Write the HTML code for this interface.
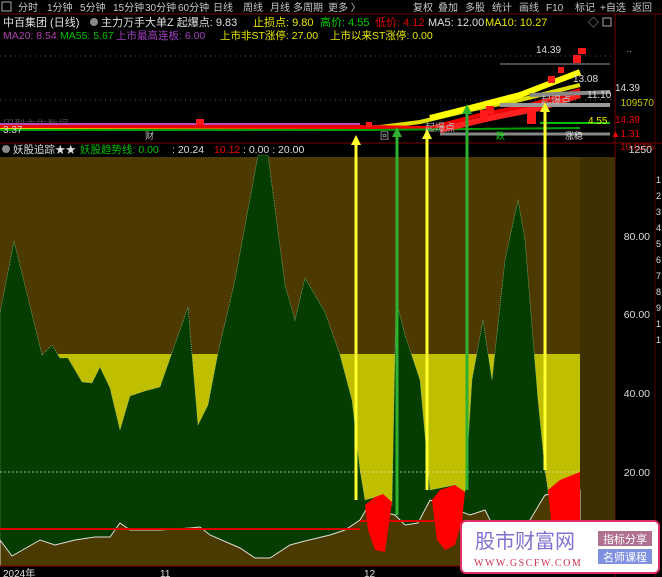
<!DOCTYPE html>
<html><head><meta charset="utf-8"><style>
html,body{margin:0;padding:0;background:#000;width:662px;height:577px;overflow:hidden}
svg{display:block;font-family:"Liberation Sans","Noto Sans CJK SC",sans-serif}
</style></head><body>
<svg width="662" height="577" viewBox="0 0 662 577" xmlns="http://www.w3.org/2000/svg">
<rect width="662" height="577" fill="#000"/>
<!-- toolbar -->
<g font-size="10" fill="#c8c8c8">
<rect x="2" y="2" width="9" height="9" fill="none" stroke="#aaa"/>
<text x="18" y="11">分时</text><text x="47" y="11">1分钟</text><text x="80" y="11">5分钟</text><text x="113" y="11">15分钟</text><text x="145" y="11">30分钟</text><text x="178" y="11">60分钟</text><text x="213" y="11">日线</text><text x="243" y="11">周线</text><text x="270" y="11">月线</text><text x="293" y="11">多周期</text><text x="328" y="11">更多 〉</text>
<text x="413" y="11">复权</text><text x="438" y="11">叠加</text><text x="465" y="11">多股</text><text x="492" y="11">统计</text><text x="519" y="11">画线</text><text x="546" y="11">F10</text><text x="575" y="11">标记</text><text x="600" y="11">+自选</text><text x="632" y="11">返回</text>
</g>
<line x1="0" y1="14" x2="662" y2="14" stroke="#600" />
<!-- title rows -->
<g font-size="11">
<text x="3" y="26" fill="#e0e0e0">中百集团 (日线)</text>
<circle cx="94" cy="22" r="4" fill="#888"/>
<text x="101" y="26" fill="#e0e0e0">主力万手大单Z 起爆点: 9.83</text>
<text x="253" y="26" fill="#e8e800">止损点: 9.80</text>
<text x="320" y="26" fill="#00d000">高价: 4.55</text>
<text x="375" y="26" fill="#e00000">低价: 4.12</text>
<text x="428" y="26" fill="#e0e0e0">MA5: 12.00</text>
<text x="485" y="26" fill="#e8e800">MA10: 10.27</text>
<text x="588" y="26" fill="#aaa">◇</text><rect x="603" y="18" width="8" height="8" fill="none" stroke="#aaa"/>
</g>
<g font-size="10.5">
<text x="3" y="39" fill="#b040b0">MA20: 8.54</text>
<text x="60" y="39" fill="#00c000">MA55: 5.67</text>
<text x="116" y="39" fill="#a040c0">上市最高连板: 6.00</text>
<text x="220" y="39" fill="#e8e800">上市非ST涨停: 27.00</text>
<text x="330" y="39" fill="#e8e800">上市以来ST涨停: 0.00</text>
</g>
<line x1="615" y1="14" x2="615" y2="577" stroke="#700"/>
<line x1="655" y1="14" x2="655" y2="577" stroke="#500"/>
<line x1="0" y1="56" x2="615" y2="56" stroke="#555" stroke-dasharray="1 4"/>
<line x1="0" y1="100" x2="615" y2="100" stroke="#555" stroke-dasharray="1 4"/>
<!-- price chart -->
<text x="3" y="128" font-size="11" fill="#444">田型主生数据</text>
<g stroke-width="2" fill="none">
<path d="M0 128 L360 128 L380 127 L420 122 L470 110 L520 100 L580 85" stroke="#e0e000" stroke-width="4"/>
<path d="M0 126 L360 127 L430 128 L480 115 L530 105 L580 90" stroke="#e00" stroke-width="4"/>
<path d="M0 124 L360 124" stroke="#b050b0"/>
<path d="M0 130 L370 130 L580 128" stroke="#00a000"/>
<path d="M430 118 L470 108 L520 95 L580 72" stroke="#ffff00" stroke-width="6"/>
<path d="M440 130 L490 118 L540 108 L580 95" stroke="#ff2020" stroke-width="6"/>
<path d="M500 105 L610 105" stroke="#999" stroke-width="4"/>
<path d="M530 95 L610 92" stroke="#888" stroke-width="4"/>
<path d="M440 134 L610 134" stroke="#888" stroke-width="3"/>
<path d="M500 64 L610 64" stroke="#999" stroke-width="1"/>
<path d="M540 123 L610 123" stroke="#00c000" stroke-width="2"/>
</g>
<g fill="#ff1a1a">
<rect x="196" y="119" width="8" height="6"/><rect x="366" y="122" width="6" height="5"/>
<rect x="480" y="110" width="8" height="12"/><rect x="486" y="106" width="8" height="8"/>
<rect x="527" y="110" width="9" height="14"/><rect x="548" y="76" width="7" height="7"/>
<rect x="558" y="67" width="6" height="6"/><rect x="573" y="55" width="8" height="8"/><rect x="578" y="48" width="8" height="6"/>
</g>
<g font-size="10" fill="#ddd">
<text x="3" y="133">3.37</text><text x="536" y="53">14.39</text><text x="573" y="82">13.08</text><text x="587" y="98">11.10</text>
<text x="541" y="104" fill="#bbb">起爆点</text><text x="425" y="131" fill="#bbb">起爆点</text>
<text x="588" y="124" fill="#ee0">4.55</text>
<text x="145" y="139" fill="#bbb" font-size="9">财</text>
<text x="380" y="139" fill="#bbb" font-size="9">回</text>
<text x="496" y="139" fill="#0d0" font-size="9">跌</text>
<text x="565" y="139" fill="#ddd" font-size="9">涨稳</text>
</g>
<g font-size="10" text-anchor="end">
<text x="632" y="52" fill="#aaa">..</text>
<text x="640" y="91" fill="#ddd">14.39</text>
<text x="654" y="106" fill="#c8c800">109570</text>
<text x="640" y="123" fill="#e00">14.39</text>
<text x="640" y="137" fill="#e00">▲1.31</text>
<text x="654" y="150" fill="#c00">10.02%</text>
<text x="652" y="153" fill="#ddd" font-size="10.5" dy="-2" display="none">1250</text>
</g>
<line x1="0" y1="143" x2="662" y2="143" stroke="#700"/>
<!-- indicator title -->
<g font-size="10.5">
<circle cx="6" cy="149" r="4" fill="#888"/>
<text x="13" y="153" fill="#ddd">妖股追踪★★</text>
<text x="80" y="153" fill="#00c000">妖股趋势线: 0.00</text>
<text x="172" y="153" fill="#ddd">: 20.24</text>
<text x="214" y="153" fill="#e00">10.12</text>
<text x="243" y="153" fill="#ddd">: 0.00 : 20.00</text>
<text x="652" y="153" fill="#ddd" text-anchor="end">1250</text>
</g>
<!-- indicator panel -->
<rect x="0" y="157" width="615" height="409" fill="#4d3a00"/>
<rect x="580" y="157" width="35" height="409" fill="#3e3000"/>
<rect x="0" y="354" width="580" height="206" fill="#bfbf00"/>
<path d="M0 560 L0 313 L14 241 L42 355 L52 345 L60 358 L68 358 L82 382 L92 383 L100 367 L110 388 L120 430 L130 396 L145 391 L160 387 L188 307 L198 425 L208 405 L218 353 L235 280 L258 155 L268 155 L285 285 L295 320 L305 278 L325 312 L340 355 L352 400 L360 470 L365 500 L383 495 L392 505 L396 300 L405 335 L420 380 L430 490 L455 485 L465 492 L472 380 L483 320 L492 380 L505 260 L518 200 L525 240 L538 400 L545 470 L548 490 L548 560 Z" fill="#053d00" stroke="#9c9" stroke-width="0.6" stroke-dasharray="1 1"/>
<line x1="0" y1="472" x2="580" y2="472" stroke="#ddd" stroke-dasharray="2 2" stroke-width="0.8"/>
<path d="M0 540 L12 556 L40 540 L55 545 L75 540 L95 537 L110 537 L120 523 L130 530 L160 530 L190 528 L200 527 L210 535 L240 548 L255 558 L270 558 L290 545 L305 541 L330 535 L345 530 L360 520 L367 508 L395 515 L405 525 L418 523 L430 500 L470 515 L485 510 L490 520 L500 535 L530 520 L545 495 L580 490 L580 566 L0 566 Z" fill="#4a3a00" stroke="#ddd" stroke-width="1"/>
<line x1="0" y1="529" x2="360" y2="529" stroke="#d00" stroke-width="2"/>
<line x1="360" y1="521" x2="580" y2="521" stroke="#d00" stroke-width="2"/>
<g fill="#ff0000">
<path d="M365 505 L375 497 L383 494 L392 502 L388 530 L385 552 L375 550 L368 530 Z"/>
<path d="M432 500 L440 490 L455 485 L465 492 L462 520 L455 545 L445 550 L437 540 Z"/>
<path d="M548 490 L560 480 L580 472 L580 560 L555 560 Z"/>
</g>
<line x1="0" y1="566" x2="615" y2="566" stroke="#800"/>
<!-- arrows -->
<g stroke-width="3">
<line x1="356" y1="143" x2="356" y2="500" stroke="#ffff30"/>
<line x1="397" y1="135" x2="397" y2="515" stroke="#30b030"/>
<line x1="427" y1="137" x2="427" y2="490" stroke="#ffff30"/>
<line x1="467" y1="112" x2="467" y2="490" stroke="#30b030"/>
<line x1="545" y1="110" x2="545" y2="470" stroke="#ffff30"/>
</g>
<path d="M351 145 L356 135 L361 145Z" fill="#ffff30"/><path d="M392 137 L397 127 L402 137Z" fill="#30b030"/>
<path d="M422 139 L427 129 L432 139Z" fill="#ffff30"/><path d="M462 114 L467 104 L472 114Z" fill="#30b030"/>
<path d="M540 112 L545 102 L550 112Z" fill="#ffff30"/>
<!-- axis labels -->
<g font-size="10.5" fill="#ddd" text-anchor="end">
<text x="650" y="240">80.00</text><text x="650" y="318">60.00</text><text x="650" y="397">40.00</text><text x="650" y="476">20.00</text>
</g>
<g font-size="9" fill="#ddd"><text x="656" y="183">1</text><text x="656" y="199">2</text><text x="656" y="215">3</text><text x="656" y="231">4</text><text x="656" y="247">5</text><text x="656" y="263">6</text><text x="656" y="279">7</text><text x="656" y="295">8</text><text x="656" y="311">9</text><text x="656" y="327">1</text><text x="656" y="343">1</text></g>
<!-- dates -->
<g font-size="10" fill="#ddd"><text x="3" y="577">2024年</text><text x="160" y="577">11</text><text x="364" y="577">12</text></g>
<!-- watermark -->
<rect x="461" y="521" width="198" height="52" rx="5" fill="#fff" stroke="#e0306a" stroke-width="2"/>
<text x="475" y="548" font-size="20" fill="#8070d0" font-family="'Noto Sans CJK SC',sans-serif">股市财富网</text>
<text x="474" y="566" font-size="10" fill="#d03050" font-family="'Liberation Serif',serif" letter-spacing="1.5">WWW.GSCFW.COM</text>
<rect x="598" y="531" width="54" height="15" fill="#b07090"/>
<text x="625" y="543" font-size="11" fill="#fff" text-anchor="middle">指标分享</text>
<rect x="598" y="549" width="54" height="15" fill="#8090e0"/>
<text x="625" y="561" font-size="11" fill="#fff" text-anchor="middle">名师课程</text>
</svg>
</body></html>
